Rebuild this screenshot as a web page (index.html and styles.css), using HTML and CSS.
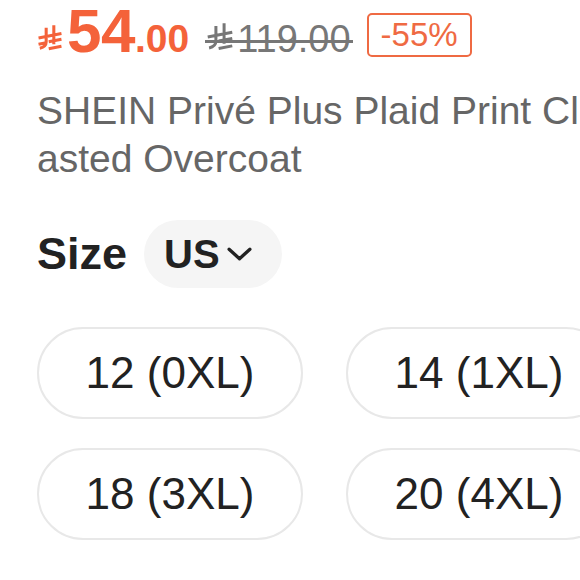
FILE: index.html
```html
<!DOCTYPE html>
<html>
<head>
<meta charset="utf-8">
<link rel="stylesheet" href="styles.css">
</head>
<body>
<div class="page">
  <div class="price-row">
    <span class="price">
      <svg class="sar sar-big" viewBox="0 0 20 22" aria-hidden="true"><path d="M7 3 V14 Q7 18 2 19 M13 1 V16 M1 11 L19 7.5 M1 16 L6 15 M9 14 L19 12 M9 19.5 L19 17.5"/></svg><span class="int">54</span><span class="dec">.00</span>
    </span>
    <span class="old">
      <svg class="sar sar-old" viewBox="0 0 20 22" aria-hidden="true"><path d="M7 3 V14 Q7 18 2 19 M13 1 V16 M1 11 L19 7.5 M9 14 L19 12 M9 19.5 L19 17.5"/></svg><span class="old-num">119.00</span>
    </span>
    <span class="discount">-55%</span>
  </div>
  <div class="title"><span class="title-line">SHEIN Privé Plus Plaid Print Cl</span><span class="title-line">asted Overcoat</span></div>
  <div class="size-row">
    <span class="size-label">Size</span>
    <span class="unit">US<svg class="chev" viewBox="0 0 24 14" aria-hidden="true"><path d="M2 2 L12 11 L22 2"/></svg></span>
  </div>
  <div class="sizes">
    <div class="size-btn">12 (0XL)</div>
    <div class="size-btn">14 (1XL)</div>
    <div class="size-btn">18 (3XL)</div>
    <div class="size-btn">20 (4XL)</div>
  </div>
</div>
</body>
</html>
```
FILE: styles.css
```css
html, body {
  margin: 0;
  padding: 0;
  background: #fff;
  overflow: hidden;
}
body {
  width: 580px;
  height: 580px;
  font-family: "Liberation Sans", Arial, sans-serif;
}
.page {
  padding-left: 37px;
  width: 700px;
}
.price-row {
  display: flex;
  align-items: baseline;
  height: 62px;
}
.price {
  color: #f4623a;
  font-weight: 700;
  display: inline-flex;
  align-items: baseline;
  line-height: 62px;
}
.sar {
  fill: none;
  stroke-linecap: butt;
}
.sar-big {
  width: 26px;
  height: 28px;
  stroke: #f4623a;
  stroke-width: 2.4;
  margin-right: 4px;
}
.int {
  font-size: 62px;
  letter-spacing: -0.5px;
}
.dec {
  font-size: 39px;
}
.old {
  position: relative;
  margin-left: 16px;
  color: #777;
  font-size: 38px;
  display: inline-flex;
  align-items: baseline;
}
.old::after {
  content: "";
  position: absolute;
  left: 0;
  right: -2px;
  top: 52%;
  height: 3px;
  background: #777;
}
.sar-old {
  width: 30px;
  height: 30px;
  stroke: #777;
  stroke-width: 2.2;
  margin-right: 2px;
}
.discount {
  margin-left: 16px;
  align-self: center;
  border: 2px solid #ef6a43;
  border-radius: 5px;
  color: #ef6a43;
  font-size: 33px;
  line-height: 40px;
  padding: 0 12px;
  position: relative;
  top: 4px;
}
.title {
  margin-top: 25px;
  color: #666;
  font-size: 39px;
  line-height: 48px;
  display: flex;
  flex-direction: column;
}
.title-line {
  white-space: nowrap;
}
.size-row {
  margin-top: 37px;
  display: flex;
  align-items: center;
  gap: 17px;
}
.size-label {
  font-weight: 700;
  font-size: 45px;
  color: #222;
}
.unit {
  display: inline-flex;
  align-items: center;
  gap: 7px;
  height: 68px;
  padding: 0 30px 0 20px;
  background: #f5f5f5;
  border-radius: 34px;
  font-weight: 700;
  font-size: 40px;
  color: #222;
}
.chev {
  width: 25px;
  height: 15px;
  fill: none;
  stroke: #222;
  stroke-width: 3.2;
  stroke-linecap: round;
  stroke-linejoin: round;
}
.sizes {
  margin-top: 39px;
  display: grid;
  grid-template-columns: 266px 266px;
  column-gap: 43px;
  row-gap: 29px;
}
.size-btn {
  box-sizing: border-box;
  height: 92px;
  border: 2px solid #e8e8e8;
  border-radius: 46px;
  display: flex;
  align-items: center;
  justify-content: center;
  font-size: 44px;
  color: #222;
}
```
